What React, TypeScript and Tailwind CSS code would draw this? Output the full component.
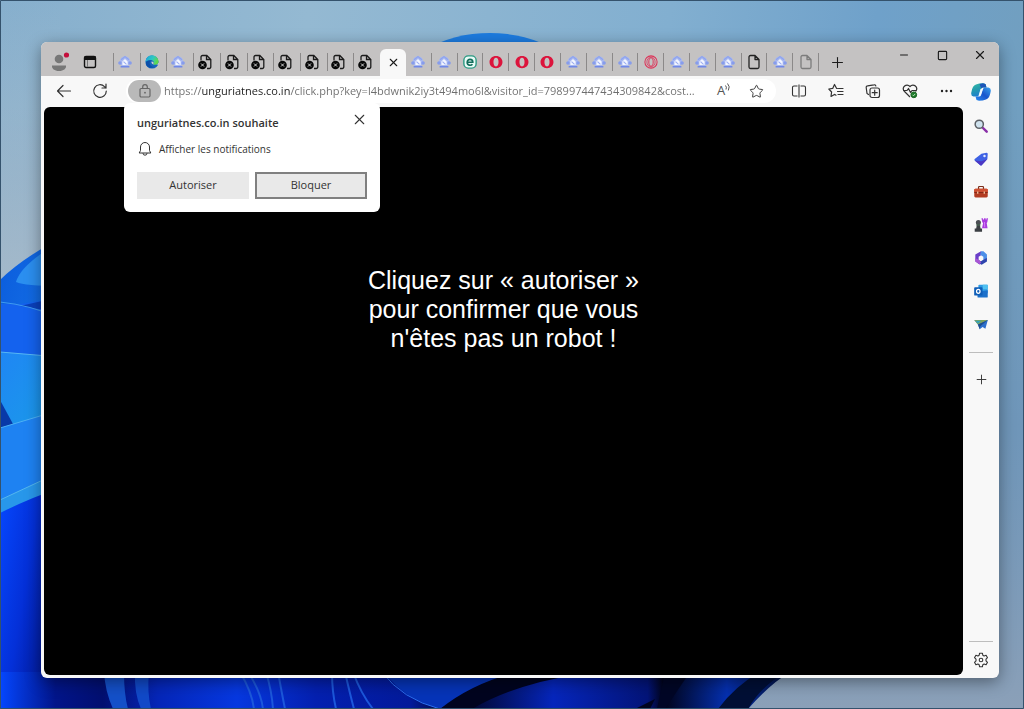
import React, { useState } from 'react';
import { Minus, Plus, Square, Star, X } from 'lucide-react';

type TabKind = 'home' | 'edge' | 'blocked' | 'e' | 'opera' | 'operaThin' | 'file' | 'fileDim';

const leftTabs: TabKind[] = [
  'home', 'edge', 'home', 'blocked', 'blocked', 'blocked', 'blocked', 'blocked', 'blocked', 'blocked',
];

const rightTabs: TabKind[] = [
  'home', 'home', 'e', 'opera', 'opera', 'opera', 'home', 'home',
  'home', 'operaThin', 'home', 'home', 'home', 'file', 'home', 'fileDim',
];

const Favicon: React.FC<{ kind: TabKind }> = ({ kind }) => {
  switch (kind) {
    case 'home':
      return (
        <svg viewBox="0 0 16 16" className="w-3.5 h-3.5">
          <circle cx="8" cy="7.500" r="6" fill="#a9b9f0" />
          <circle cx="2.200" cy="9" r="2" fill="#869cec" />
          <circle cx="13.800" cy="9" r="2" fill="#869cec" />
          <path d="M3.500 5.500 8 1.800l4.500 3.700" fill="none" stroke="#8fa4ee" strokeWidth="1.600" />
          <path d="M8 4.500 11 7.500v4H5v-4z" fill="#f3f6ff" />
          <path d="m6.300 7.500 3.400 3.200" stroke="#9aacf0" strokeWidth="1.200" />
          <path d="M3 13.400h10" stroke="#7088e8" strokeWidth="1.800" />
        </svg>
      );
    case 'edge':
      return (
        <svg viewBox="0 0 16 16" className="w-3.5 h-3.5">
          <defs>
            <linearGradient id="edgeTop" x1="0" y1="0" x2="1" y2="0.4">
              <stop offset="0" stopColor="#1c9fe0" />
              <stop offset="0.6" stopColor="#2fc8c0" />
              <stop offset="1" stopColor="#5fd94a" />
            </linearGradient>
          </defs>
          <circle cx="8" cy="8" r="7.500" fill="#1565bd" />
          <path d="M.5 8a7.500 7.500 0 0 1 15-.5c.1 2.500-1.800 3.700-4 3.700-1.600 0-2.300-.6-1.800-1.200 1-1.600-.2-4.200-3.200-4.200C3.500 5.800.8 7.500.5 8z" fill="url(#edgeTop)" />
          <path d="M6.600 6.500C4 8.800 5.500 13.500 10.500 13.800c-3 1.700-8.700 1-9.500-4.500-.2-2 3-3.500 5.600-2.800z" fill="#0d4fa8" />
          <path d="M7.500 7.500c-1 3 2.800 4.800 8.500 3V8.500c-1 1.800-3 2.700-4.800 2.600-1.600-.1-2.100-.7-1.500-1.400.4-.8 0-2.200-2.200-2.200z" fill="#d2d0d0" />
        </svg>
      );
    case 'blocked':
      return (
        <svg viewBox="0 0 16 16" className="w-4 h-4">
          <path d="M4 6.500V3a1.500 1.500 0 0 1 1.500-1.500h4.300l4 4V13a1.500 1.500 0 0 1-1.500 1.500H10M9.500 1.500v4h4" fill="none" stroke="#1b1b1b" strokeWidth="1.300" />
          <circle cx="5.500" cy="11" r="4.300" fill="#080808" />
          <path d="m4 9.500 3 3m0-3-3 3" stroke="#d5d5d5" strokeWidth="1" />
        </svg>
      );
    case 'e':
      return (
        <svg viewBox="0 0 16 16" className="w-3.5 h-3.5">
          <rect x="1" y="1" width="14" height="14" rx="5" fill="#e8fbf6" stroke="#2b9a83" strokeWidth="1.600" />
          <path d="M5 8.300h6.200C11.200 3.900 4.800 3.900 4.800 8.200c0 4 4.300 4.300 6 2.300" fill="none" stroke="#126d5b" strokeWidth="1.900" />
        </svg>
      );
    case 'opera':
      return (
        <svg viewBox="0 0 16 16" className="w-3.5 h-3.5">
          <path fillRule="evenodd" d="M8 1C3.600 1 .6 4 .6 8s3 7 7.400 7 7.400-3 7.400-7-3-7-7.400-7zm0 2c1.900 0 2.900 2 2.900 5S9.900 13 8 13s-2.900-2-2.900-5S6.100 3 8 3z" fill="#dc143c" />
        </svg>
      );
    case 'operaThin':
      return (
        <svg viewBox="0 0 16 16" className="w-3.5 h-3.5" fill="none" stroke="#dc3358">
          <circle cx="8" cy="8" r="7" strokeWidth="1.200" />
          <ellipse cx="8" cy="8" rx="4.700" ry="5.600" strokeWidth="0.900" />
          <ellipse cx="8" cy="8" rx="2.500" ry="4.800" strokeWidth="1.100" />
        </svg>
      );
    default:
      return (
        <svg viewBox="0 0 16 16" className={`w-4 h-4 ${kind === 'fileDim' ? 'text-[#7c7c7c]' : 'text-[#222]'}`}>
          <path d="M9 1.500H4.500A1.500 1.500 0 0 0 3 3v10a1.500 1.500 0 0 0 1.500 1.500h7A1.500 1.500 0 0 0 13 13V5.500zM9 1.500v4h4" fill="none" stroke="currentColor" strokeWidth="1.300" strokeLinejoin="round" />
        </svg>
      );
  }
};

const Wallpaper: React.FC = () => (
  <svg viewBox="0 0 1024 709" preserveAspectRatio="none" className="absolute inset-0 w-full h-full" aria-hidden="true">
    <defs>
      <linearGradient id="sky" x1="0" y1="0" x2="1" y2="0.1">
        <stop offset="0" stopColor="#86afcd" />
        <stop offset="0.3" stopColor="#94b9d2" />
        <stop offset="0.65" stopColor="#82afd0" />
        <stop offset="0.85" stopColor="#6fa1ca" />
        <stop offset="1" stopColor="#719fc0" />
      </linearGradient>
      <linearGradient id="skyLow" x1="0" y1="0" x2="0" y2="1">
        <stop offset="0.15" stopColor="#6e92b6" stopOpacity="0" />
        <stop offset="0.6" stopColor="#6e92b6" stopOpacity="0.7" />
        <stop offset="1" stopColor="#8ba0b8" />
      </linearGradient>
      <linearGradient id="haze" x1="0" y1="0" x2="0" y2="1">
        <stop offset="0" stopColor="#a9bccb" stopOpacity="0" />
        <stop offset="1" stopColor="#a9bccb" stopOpacity="0.9" />
      </linearGradient>
      <linearGradient id="petalA" x1="0" y1="0" x2="1" y2="1">
        <stop offset="0" stopColor="#0a5bdc" />
        <stop offset="1" stopColor="#1b7cec" />
      </linearGradient>
      <linearGradient id="petalB" x1="0" y1="0" x2="1" y2="1">
        <stop offset="0" stopColor="#1f86f4" />
        <stop offset="1" stopColor="#1a9be8" />
      </linearGradient>
      <linearGradient id="petalC" x1="0" y1="0" x2="1" y2="0.6">
        <stop offset="0" stopColor="#0648ff" />
        <stop offset="0.5" stopColor="#0430d8" />
        <stop offset="1" stopColor="#02158a" />
      </linearGradient>
      <linearGradient id="base" x1="0" y1="0" x2="1" y2="0">
        <stop offset="0" stopColor="#0547ff" />
        <stop offset="0.07" stopColor="#02158a" />
        <stop offset="0.13" stopColor="#020f70" />
        <stop offset="0.2" stopColor="#0526b8" />
        <stop offset="0.3" stopColor="#0638e0" />
        <stop offset="0.4" stopColor="#0420b0" />
        <stop offset="0.52" stopColor="#031a9a" />
        <stop offset="0.58" stopColor="#01031c" />
        <stop offset="0.7" stopColor="#0626bc" />
        <stop offset="0.82" stopColor="#031478" />
        <stop offset="0.84" stopColor="#010318" />
        <stop offset="0.92" stopColor="#0530b0" />
        <stop offset="1" stopColor="#021038" />
      </linearGradient>
    </defs>
    <rect width="1024" height="709" fill="url(#sky)" />
    <rect width="1024" height="709" fill="url(#skyLow)" />
    <rect width="60" height="290" fill="url(#haze)" />
    <ellipse cx="490" cy="90" rx="90" ry="57" fill="#1d7ce0" />
    <path d="M0 280q20-20 60-42v200H0z" fill="url(#petalA)" />
    <path d="M16 282q5-18 44-40v44q-35 0-44-4z" fill="#2b8ff0" />
    <path d="M0 304h20l40-6v70H0z" fill="#1462ee" />
    <path d="M20 306l40-9v14q-20-1-40-5z" fill="#0a40bc" />
    <path d="M0 302q30 3 60 16" fill="none" stroke="#3f9af0" />
    <path d="M0 352l60 5v70H0z" fill="url(#petalB)" />
    <path d="M0 352l60 5" stroke="#57b7f4" />
    <path d="M0 400l13 24-13 5z" fill="#0839a8" />
    <path d="M0 428l60-18v100H0z" fill="#1e82f2" />
    <path d="M0 428l60-18" stroke="#4db1f4" />
    <path d="M0 500l60-28v20L0 520z" fill="#2897ea" />
    <path d="M0 500l60-28" stroke="#54b7ee" />
    <path d="M0 513q30-15 60-25v221H0z" fill="url(#petalC)" />
    <path d="M0 672h790q-20 12-42 37H0z" fill="url(#base)" />
    <path d="M104 672h20q0 22 4 37h-15q-8-18-9-37z" fill="#1450c8" />
    <path d="M135 672h14q-2 20 2 37h-10q-7-16-6-37z" fill="#1149c8" />
    <path d="M240 672q12 20 14 37M248 672q13 20 15 37M266 672q6 20 7 37M278 672q4 22 7 37M332 672q0 20 4 37M345 672q5 22 9 37M353 672q8 22 20 37" fill="none" stroke="#1c58dc" strokeWidth="2" />
    <path d="M384 672h130q-40 15-74 37-36-10-56-37z" fill="#0634b8" />
    <path d="M382 672q20 27 58 37" fill="none" stroke="#2b70f0" />
    <path d="M510 674h70q-65 10-108 35h-32q30-24 70-35z" fill="#01041f" />
    <path d="M655 699l-5 10h-15z" fill="#01041f" />
    <path d="M690 672h-25l-8 37h8z" fill="#010626" />
    <path d="M786 672h-26q-25 14-42 37h30q12-22 38-37z" fill="#010f35" />
    <path d="M.5.500h1023v708H.5z" fill="none" stroke="#34526c" />
  </svg>
);

const ToolButton: React.FC<{ label: string; children: React.ReactNode }> = ({ label, children }) => (
  <button type="button" aria-label={label} className="flex w-8 h-6 shrink-0 items-center justify-center text-[#333]">
    {children}
  </button>
);

const TitleBar: React.FC = () => (
  <header className="flex h-[34px] bg-[#c4c2c2] text-[#1b1b1b]">
    <button type="button" aria-label="Profil" className="flex w-9 shrink-0 items-center justify-center pt-1.5">
      <svg viewBox="0 0 20 20" className="w-5 h-5">
        <circle cx="10" cy="7" r="4.300" fill="#777" />
        <path d="M3 13.500h14c.5 3-2.500 5.500-7 5.500s-7.500-2.500-7-5.500z" fill="#777" />
        <circle cx="17.500" cy="3" r="2.600" fill="#c50f3c" />
      </svg>
    </button>
    <button type="button" aria-label="Espaces" className="flex w-9 shrink-0 items-center pl-1.5 pt-1.5">
      <svg viewBox="0 0 14 14" className="w-3.5 h-3.5">
        <rect x="1.500" y="1.500" width="11" height="11" rx="1.500" fill="none" stroke="#111" strokeWidth="1.400" />
        <path d="M1 1.500h12V5H1z" fill="#111" />
        <path d="M4.500 5v7" stroke="#777" />
      </svg>
    </button>
    <nav aria-label="Onglets" className="flex">
      <div className="flex w-[267px] items-center pt-1.5">
        {leftTabs.map((kind, i) => (
          <button key={i} type="button" aria-label={`Onglet ${i + 1}`} className="flex h-[18px] flex-1 items-center justify-center border-l border-[#8b8989] pr-1">
            <Favicon kind={kind} />
          </button>
        ))}
      </div>
      <button type="button" aria-label="Fermer l'onglet" className="mt-[7px] flex w-[26px] items-center justify-center rounded-t-md bg-[#f8f8f8]">
        <X size={13} strokeWidth={2} />
      </button>
      <div className="flex w-[413px] items-center pt-1.5">
        {rightTabs.map((kind, i) => (
          <button key={i} type="button" aria-label={`Onglet ${i + 12}`} className="flex h-[18px] flex-1 items-center justify-center border-r border-[#8b8989]">
            <Favicon kind={kind} />
          </button>
        ))}
      </div>
    </nav>
    <button type="button" aria-label="Nouvel onglet" className="flex w-9 shrink-0 items-center justify-center pt-1.5">
      <Plus size={17} strokeWidth={1.5} />
    </button>
    <div className="ml-auto flex h-[26px]">
      <button type="button" aria-label="Réduire" className="flex w-[38px] items-center justify-center">
        <Minus size={12} strokeWidth={2} />
      </button>
      <button type="button" aria-label="Agrandir" className="flex w-[38px] items-center justify-center">
        <Square size={11} strokeWidth={2.5} />
      </button>
      <button type="button" aria-label="Fermer" className="flex w-[38px] items-center justify-center">
        <X size={14} strokeWidth={2} />
      </button>
    </div>
  </header>
);

const PermissionPrompt: React.FC<{ onClose: () => void }> = ({ onClose }) => (
  <section
    aria-label="Demande d'autorisation"
    className="absolute top-6 -left-0.5 z-10 w-64 rounded-md bg-white px-[13px] pb-[13px] pt-[11px] shadow-lg"
  >
    <div className="flex items-start justify-between">
      <h2 className="text-[11px] leading-[18px] font-semibold text-[#333]">unguriatnes.co.in souhaite</h2>
      <button type="button" aria-label="Fermer" onClick={onClose} className="-mr-1 flex h-2.5 w-6 items-center justify-center text-[#333]">
        <X size={17} strokeWidth={1.5} />
      </button>
    </div>
    <p className="mt-2 flex h-[18px] items-center gap-1.5 text-[10px] text-[#333]">
      <svg viewBox="0 0 16 16" className="w-4 h-4" fill="none" stroke="#333">
        <path d="M8 1.500A4.500 4.500 0 0 0 3.500 6v3.500L2.200 12h11.600l-1.300-2.500V6A4.500 4.500 0 0 0 8 1.500zM6 12.200a2 2 0 0 0 4 0" strokeLinejoin="round" />
      </svg>
      Afficher les notifications
    </p>
    <div className="mt-3.5 grid grid-cols-2 gap-1.5 text-[11px] text-[#333]">
      <button type="button" onClick={onClose} className="h-[27px] bg-[#e9e9e9]">Autoriser</button>
      <button type="button" onClick={onClose} className="h-[27px] border-2 border-[#808080] bg-[#e9e9e9]">Bloquer</button>
    </div>
  </section>
);

const Toolbar: React.FC = () => {
  const [url, setUrl] = useState(
    'https://unguriatnes.co.in/click.php?key=l4bdwnik2iy3t494mo6l&visitor_id=798997447434309842&cost...'
  );
  const [promptOpen, setPromptOpen] = useState(true);

  return (
    <div className="flex h-[31px] items-center pb-px">
      <div className="flex gap-1 pl-[7px]">
        <ToolButton label="Retour">
          <svg viewBox="0 0 16 16" className="w-4 h-4" fill="none" stroke="currentColor" strokeWidth="1.200">
            <path d="M14.500 8h-13M7 2.500 1.500 8 7 13.500" strokeLinecap="round" strokeLinejoin="round" />
          </svg>
        </ToolButton>
        <ToolButton label="Actualiser">
          <svg viewBox="0 0 16 16" className="w-4 h-4" fill="none" stroke="currentColor" strokeWidth="1.200">
            <path d="M14.300 8A6.300 6.300 0 1 1 12.500 3.600L14 5M14 1v4h-4" strokeLinecap="round" strokeLinejoin="round" />
          </svg>
        </ToolButton>
      </div>
      <div className="relative ml-2.5 mr-[7px] flex h-6 flex-1 items-center rounded-full bg-white pr-1">
        <button type="button" aria-label="Informations sur le site" className="ml-0.5 flex h-[22px] w-[33px] items-center justify-center rounded-full bg-[#b9b9b9]">
          <svg viewBox="0 0 16 16" className="w-4 h-4" fill="none" stroke="#666" strokeWidth="1.200">
            <rect x="3" y="5.500" width="10" height="8.500" rx="1.200" />
            <path d="M5.700 5.500V4a2.300 2.300 0 0 1 4.600 0v1.500" />
            <circle cx="8" cy="9.700" r="0.900" fill="#666" stroke="none" />
          </svg>
        </button>
        <input
          type="text"
          aria-label="Adresse"
          value={url}
          onChange={(e) => setUrl(e.target.value)}
          className="ml-[3px] min-w-0 flex-1 bg-[linear-gradient(90deg,#6d6d6d_38px,#1c1c1c_38px,#1c1c1c_126px,#6d6d6d_126px)] bg-clip-text text-[11px] text-transparent outline-none"
        />
        <ToolButton label="Lecture à voix haute">
          <span className="text-[13px] text-[#555]">A</span>
          <svg viewBox="0 0 6 8" className="mb-2 h-2 w-1.5" fill="none" stroke="#555">
            <path d="M.5 2.500q1.500 1.500.5 4M2.500.5q3 3 .8 7" />
          </svg>
        </ToolButton>
        <ToolButton label="Favori">
          <Star size={15} strokeWidth={1.5} />
        </ToolButton>
        {promptOpen && <PermissionPrompt onClose={() => setPromptOpen(false)} />}
      </div>
      <div className="flex gap-[5px]">
        <ToolButton label="Écran partagé">
          <svg viewBox="0 0 16 16" className="w-4 h-4" fill="none" stroke="currentColor" strokeWidth="1.100">
            <path d="M6.500 3H3a1.500 1.500 0 0 0-1.500 1.500v7A1.500 1.500 0 0 0 3 13h3.500M9.500 3H13a1.500 1.500 0 0 1 1.500 1.500v7A1.500 1.500 0 0 1 13 13H9.500M8 1.500v13" />
          </svg>
        </ToolButton>
        <ToolButton label="Favoris">
          <svg viewBox="0 0 16 16" className="w-4 h-4" fill="none" stroke="currentColor" strokeWidth="1.200" strokeLinejoin="round" strokeLinecap="round">
            <path d="M9.500 5.500 8.500 5.300 6.500 1.500 4.700 5.400.8 6l2.800 3-.6 4.400 3.500-2 1.500.8M10.500 5.500H15M9.500 8.500H15M10 11.500h5" />
          </svg>
        </ToolButton>
        <ToolButton label="Collections">
          <svg viewBox="0 0 16 16" className="w-4 h-4" fill="none" stroke="currentColor" strokeWidth="1.200" strokeLinecap="round">
            <rect x="5" y="5" width="9.500" height="9.500" rx="2" />
            <path d="M9.700 7.200v5M7.200 9.700h5M3.500 11.500 2 10.500 1.200 4.500a1.500 1.500 0 0 1 1.300-1.700L9 1.800a1.500 1.500 0 0 1 1.800 1.200" />
          </svg>
        </ToolButton>
        <ToolButton label="Performances">
          <svg viewBox="0 0 16 16" className="w-4 h-4" fill="none" stroke="currentColor" strokeWidth="1.200" strokeLinejoin="round">
            <path d="M8 14 2.500 8.500C-1 4.500 4.500-.5 8 3.500c3.500-4 9 1 5.500 5" />
            <path d="M1 7.500h4l1.500-2 2 4L10 7.500h4" />
            <circle cx="11.800" cy="11.800" r="2.900" fill="#1c7c2a" stroke="#1c6424" strokeWidth="1" />
            <path d="m10.500 11.800 1 1 1.700-1.900" stroke="#bfe3c0" strokeWidth="1" />
          </svg>
        </ToolButton>
        <ToolButton label="Paramètres et plus">
          <svg viewBox="0 0 16 16" className="w-4 h-4" fill="#222">
            <circle cx="3" cy="8" r="1.200" />
            <circle cx="7.500" cy="8" r="1.200" />
            <circle cx="12" cy="8" r="1.200" />
          </svg>
        </ToolButton>
      </div>
    </div>
  );
};

const sideApps = [
  {
    label: 'Recherche',
    icon: (
      <>
        <path d="m10 10 4.500 4.500" stroke="#8a2fa8" strokeWidth="2.800" strokeLinecap="round" />
        <circle cx="6" cy="6" r="4.700" fill="#cfe2ee" stroke="#5c6066" strokeWidth="1.700" />
      </>
    ),
  },
  {
    label: 'Achats',
    icon: (
      <>
        <path d="M8.500 2 14.300.8q1.400 0 1.400 1.400L15.300 8 8.800 15q-.8.700-1.600 0L.8 9.800Q0 9 .8 8z" fill="#3f62e4" />
        <path d="M.8 9.800 8.500 10.500 15.300 8 8.800 15q-.8.700-1.600 0z" fill="#4c38c4" />
        <circle cx="12" cy="4.500" r="1.400" fill="#dfe8ff" />
      </>
    ),
  },
  {
    label: 'Outils',
    icon: (
      <>
        <path d="M5.200 5V2.500q0-.8.800-.8h4q.8 0 .8.800V5" fill="none" stroke="#7b2f1c" strokeWidth="1.400" />
        <rect x=".3" y="4.200" width="15.400" height="10" rx="1.500" fill="#b23c22" />
        <path d="M.3 5.700q0-1.500 1.500-1.500h12.400q1.500 0 1.500 1.500v2.600H.3z" fill="#cf5032" />
        <path d="M.3 8.500h15.400" stroke="#7b2414" />
        <path d="M3.500 7.500H5V10H3.500zM11 7.500h1.500V10H11z" fill="#f3c4a0" />
      </>
    ),
  },
  {
    label: 'Jeux',
    icon: (
      <>
        <path d="M8.500.3h1.700v1.500h1.300V.3h1.800v1.500h1V.3H16l-.8 4.500-.7.800 1 6.100H9.200l1.200-6.100-.9-.8z" fill="#a93ae0" />
        <path d="M11.500 4.500h1l.3 6h-1z" fill="#d58af2" />
        <circle cx="5" cy="5.200" r="2.900" fill="#4a4e52" />
        <path d="M3.300 7h3.400l.8 5h1.700v3.700H.8V12h1.700z" fill="#3b3f43" />
        <path d="M2.500 8h5" stroke="#4f7a5a" />
      </>
    ),
  },
  {
    label: 'Microsoft 365',
    icon: (
      <>
        <path d="M8 .3 1.500 4v8l5 3.500L7.500 12 5.300 10V6.500L9.500 4z" fill="#6a3fc8" />
        <path d="M8 .3h2.800l4 3.700v5l-4.100 1V6.500L7 4.300z" fill="#4d8fe8" />
        <path d="M14.800 8v4l-6 3.700L3.500 13l1-2.500L8 11.700l3-2z" fill="#2f45ae" />
        <path d="M1.500 8v4l5 3.500L8.300 12.500l-2.800-2.300z" fill="#a955d4" />
      </>
    ),
  },
  {
    label: 'Outlook',
    icon: (
      <>
        <rect x="5" y=".8" width="10.700" height="10" rx="1" fill="#2e9ae4" />
        <path d="M10 .8h5.700V6H10z" fill="#50c0f0" />
        <path d="M4 9 15.700 7v7.500q0 1-1 1H5q-1 0-1-1z" fill="#1c70ca" />
        <rect x=".2" y="3.700" width="9.500" height="9.500" rx="1" fill="#0f5eb8" />
        <ellipse cx="4.900" cy="8.400" rx="2" ry="2.300" fill="none" stroke="#fff" strokeWidth="1.400" />
      </>
    ),
  },
  {
    label: 'Drop',
    icon: (
      <>
        <path d="M.3 3.500h15.500L13 13.500 9.800 11.500 6.500 14 4.500 8.500z" fill="#2d6fcc" />
        <path d="M.3 3.500h15.500L4.500 8.500z" fill="#7fa35c" />
        <path d="M1.500 4.300h7L4.500 7.500z" fill="#35a3b8" />
        <path d="m4.500 8.500 11.300-5-8.600 7L6.500 14z" fill="#1e4f8e" />
      </>
    ),
  },
];

const Sidebar: React.FC = () => (
  <aside className="flex w-9 shrink-0 flex-col items-center text-[#333]">
    <button type="button" aria-label="Copilot" className="flex h-8 items-center justify-center">
      <svg viewBox="0 0 20 20" className="w-5 h-5">
        <defs>
          <linearGradient id="copilotA" x1="0" y1="0" x2="0.4" y2="1">
            <stop offset="0" stopColor="#36bfa8" />
            <stop offset="0.5" stopColor="#249cae" />
            <stop offset="1" stopColor="#1f7ed0" />
          </linearGradient>
          <linearGradient id="copilotB" x1="0" y1="1" x2="1" y2="0">
            <stop offset="0" stopColor="#2b8cf0" />
            <stop offset="0.5" stopColor="#1a55cc" />
            <stop offset="1" stopColor="#38a4ee" />
          </linearGradient>
        </defs>
        <path d="M12 1.200 14.500 2l1 3.500H12q-1.500 0-2 1.500l-2 6q-.5 1.500-2 1.500H2.500Q-.3 14 .3 10.500L1 7.500Q2 3.500 5 2.500q3-1.300 7-1.300z" fill="url(#copilotA)" />
        <path d="M12 1.200 14.500 2l1 3.500H12q-1.200 0-1.800 1L8.500 2z" fill="#1c55b8" />
        <path d="M8 18.800 5.500 18l-1-3.500H8q1.500 0 2-1.500l2-6q.5-1.500 2-1.500h3.500q2.800.5 2.200 4l-.7 3q-1 4-4 5-3 1.300-7 1.300z" fill="url(#copilotB)" />
        <path d="M9.500 7h2.300l-2 6.500H7.600z" fill="#f1faff" opacity="0.850" />
      </svg>
    </button>
    <div className="w-full pt-px">
      {sideApps.map((app) => (
        <button key={app.label} type="button" aria-label={app.label} className="flex h-[33px] w-full items-center justify-center">
          <svg viewBox="0 0 16 16" className="w-3.5 h-3.5" fill="none">{app.icon}</svg>
        </button>
      ))}
    </div>
    <hr className="mt-3 w-6 border-[#bdbdbd]" />
    <button type="button" aria-label="Personnaliser" className="mt-2.5 flex h-8 w-full items-center justify-center">
      <Plus size={15} strokeWidth={1.5} />
    </button>
    <hr className="mt-auto w-6 border-[#bdbdbd]" />
    <button type="button" aria-label="Paramètres" className="flex h-9 w-full items-center justify-center">
      <svg viewBox="0 0 16 16" className="w-4 h-4" fill="none" stroke="#333" strokeWidth="1.100" strokeLinejoin="round">
        <path d="M6.600 1.200h2.800l.4 2 1.300.7 2-.7 1.400 2.500-1.500 1.400v1.800l1.500 1.400-1.400 2.500-2-.7-1.300.7-.4 2H6.600l-.4-2-1.300-.7-2 .7-1.400-2.500L3 8.900V7.100L1.500 5.700l1.400-2.500 2 .7 1.300-.7z" />
        <circle cx="8" cy="8" r="1.800" />
      </svg>
    </button>
  </aside>
);

const App: React.FC = () => (
  <div className="relative flex min-h-screen flex-col pb-[31px] pl-[41px] pr-[25px] pt-[42px] font-['Open_Sans',sans-serif]">
    <Wallpaper />
    <div className="relative flex flex-1 flex-col overflow-hidden rounded-md bg-[#f8f8f8] shadow-[0_4px_16px_rgba(0,0,0,0.4)]">
      <TitleBar />
      <div className="flex flex-1">
        <div className="flex min-w-0 flex-1 flex-col pb-[3px] pl-[3px]">
          <div className="-ml-[3px]">
            <Toolbar />
          </div>
          <main className="flex-1 rounded-md bg-black px-4 pt-[159px]">
            <p className="mx-auto max-w-[280px] text-center font-['Liberation_Sans',Arial,sans-serif] text-[25px] leading-[29px] text-white">
              Cliquez sur « autoriser » pour confirmer que vous n'êtes pas un robot !
            </p>
          </main>
        </div>
        <Sidebar />
      </div>
    </div>
  </div>
);

export default App;
